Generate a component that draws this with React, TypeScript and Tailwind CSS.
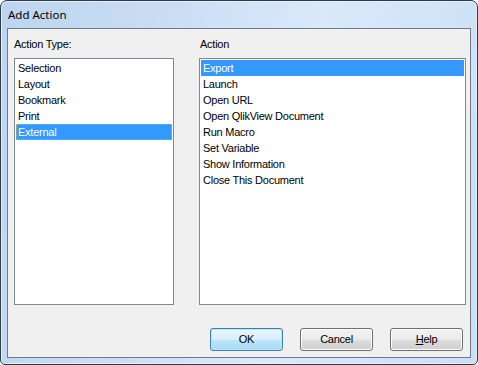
import React from "react";

const types = ["Selection", "Layout", "Bookmark", "Print", "External"];
const actions = [
  "Export",
  "Launch",
  "Open URL",
  "Open QlikView Document",
  "Run Macro",
  "Set Variable",
  "Show Information",
  "Close This Document",
];

function ListBox({ items, selected, focus, className }: { items: string[]; selected: number; focus?: boolean; className: string }) {
  return (
    <div className={`h-[247px] border border-[#828790] bg-white p-[1px] ${className}`}>
      {items.map((it, i) => (
        <div
          key={it}
          className={`h-[16px] pl-[2px] leading-[16px] ${i === selected ? "bg-[#3399ff] text-white" : "text-black"} ${
            i === selected && focus ? "outline-1 outline-dotted outline-[#e8a64a] -outline-offset-1" : ""
          }`}
        >
          {it}
        </div>
      ))}
    </div>
  );
}

function Btn({ children, def }: { children: React.ReactNode; def?: boolean }) {
  return (
    <div
      className={`flex h-[23px] w-[73px] items-center justify-center rounded-[3px] border text-black ${
        def
          ? "border-[#3c7fb1] bg-[linear-gradient(#eaf6fd_0%,#d9f0fc_50%,#bee6fd_51%,#a7d9f5_100%)] shadow-[inset_0_0_0_1px_#bfe4f9]"
          : "border-[#707070] bg-[linear-gradient(#f2f2f2_0%,#ebebeb_50%,#dddddd_51%,#cfcfcf_100%)] shadow-[inset_0_0_0_1px_#fcfcfc]"
      }`}
    >
      {children}
    </div>
  );
}

export default function App() {
  return (
    <div className="h-[365px] w-[478px] bg-white">
      <div
        className="flex h-[365px] w-[478px] flex-col rounded-t-[7px] rounded-b-[5px] border border-[#2e3a46] bg-[linear-gradient(100deg,#bcd5ef_0%,#c9ddf3_30%,#d9e9fa_60%,#cadff5_100%)] shadow-[inset_0_0_0_1px_#e6f0fa] tracking-[-0.25px]"
        style={{ fontFamily: '"Liberation Sans", Arial, sans-serif', fontSize: "11px" }}
      >
        <div className="flex h-[27px] items-center pl-[7px] pt-[1px] text-[11.5px] tracking-normal text-black" style={{ fontFamily: '"Noto Sans", "Open Sans", sans-serif' }}>
          Add Action
        </div>
        <div className="mx-[6px] mb-[6px] flex flex-1 flex-col border border-[#6d7b8c] bg-[#f0f0f0] pl-[6px] pr-[4px] pt-[8px] pb-[6px]">
          <div className="flex gap-[25px]">
            <div className="flex w-[160px] flex-col">
              <div className="mb-[7px] h-[14px] leading-[14px] text-black">Action Type:</div>
              <ListBox items={types} selected={4} focus className="w-[160px]" />
            </div>
            <div className="flex w-[267px] flex-col">
              <div className="mb-[7px] h-[14px] pl-[1px] leading-[14px] text-black">Action</div>
              <ListBox items={actions} selected={0} className="w-[267px]" />
            </div>
          </div>
          <div className="mt-auto flex justify-end pr-[2px]">
            <div className="flex gap-[17px]">
              <Btn def>OK</Btn>
              <Btn>Cancel</Btn>
              <div className="w-[74px]">
                <Btn>
                  <span>
                    <span className="underline">H</span>elp
                  </span>
                </Btn>
              </div>
            </div>
          </div>
        </div>
      </div>
    </div>
  );
}
